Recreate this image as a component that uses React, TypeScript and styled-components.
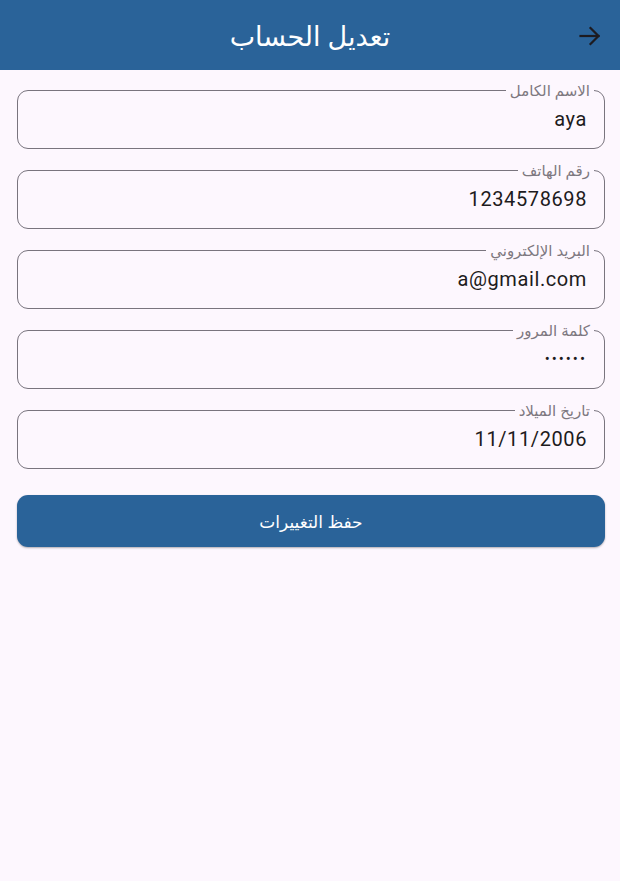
import styled, { createGlobalStyle } from "styled-components";

interface FieldData {
  label: string;
  value: string;
  secret?: boolean;
}

const fields: FieldData[] = [
  { label: "الاسم الكامل", value: "aya" },
  { label: "رقم الهاتف", value: "1234578698" },
  { label: "البريد الإلكتروني", value: "a@gmail.com" },
  { label: "كلمة المرور", value: "••••••", secret: true },
  { label: "تاريخ الميلاد", value: "11/11/2006" },
];

const GlobalStyle = createGlobalStyle`
  html, body {
    margin: 0;
    padding: 0;
    background: #fdf7fe;
    font-family: Roboto, "Noto Sans", "DejaVu Sans", sans-serif;
  }
  * {
    box-sizing: border-box;
  }
`;

const Page = styled.div`
  min-height: 881px;
  background: #fdf7fe;
`;

const Header = styled.header`
  height: 70px;
  background: #2a6399;
  display: flex;
  align-items: center;
  justify-content: center;
  position: relative;
`;

const Title = styled.h1`
  margin: 0;
  color: #ffffff;
  font-size: 27px;
  font-weight: 400;
  font-family: "Noto Sans", "DejaVu Sans", sans-serif;
`;

const BackButton = styled.button`
  position: absolute;
  right: 19px;
  top: 26px;
  width: 22px;
  height: 20px;
  padding: 0;
  border: none;
  background: transparent;
  display: flex;
  align-items: center;
  justify-content: center;
`;

const Form = styled.form`
  display: flex;
  flex-direction: column;
  gap: 13px;
  padding: 12px 15px 0 17px;
`;

const FieldBox = styled.fieldset`
  margin: 0;
  padding: 0 17px 8px 18px;
  border: 1px solid #79747e;
  border-radius: 11px;
  height: 67px;
`;

const Label = styled.legend`
  padding: 0 4px;
  margin-right: -7px;
  font-size: 15px;
  line-height: 16px;
  color: #7d7880;
  font-family: "Noto Sans", "DejaVu Sans", sans-serif;
`;

const Input = styled.input<{ $secret?: boolean }>`
  display: block;
  width: 100%;
  height: 41px;
  margin-top: 0;
  border: none;
  outline: none;
  background: transparent;
  text-align: right;
  direction: ltr;
  font-family: Roboto, sans-serif;
  font-size: ${(p) => (p.$secret ? "15px" : "20px")};
  letter-spacing: ${(p) => (p.$secret ? "2px" : "0.6px")};
  color: #1d1b20;
  padding: 0;
`;

const SaveButton = styled.button`
  margin-top: 13px;
  height: 52px;
  border: none;
  border-radius: 11px;
  background: #2a6399;
  color: #ffffff;
  font-size: 17px;
  font-family: "Noto Sans", "DejaVu Sans", sans-serif;
  box-shadow: 0 1px 2px rgba(0, 0, 0, 0.3);
`;

const ArrowIcon = () => (
  <svg
    width="22"
    height="20"
    viewBox="0 0 22 20"
    fill="none"
    stroke="#1d1b20"
    strokeWidth="2.2"
    strokeLinecap="square"
  >
    <path d="M1.5 10h18" />
    <path d="M11.5 2l8 8-8 8" />
  </svg>
);

const App = () => {
  return (
    <Page dir="rtl">
      <GlobalStyle />
      <Header>
        <Title>تعديل الحساب</Title>
        <BackButton aria-label="رجوع">
          <ArrowIcon />
        </BackButton>
      </Header>
      <Form onSubmit={(e) => e.preventDefault()}>
        {fields.map(({ label, value, secret }) => (
          <FieldBox key={label}>
            <Label>{label}</Label>
            <Input $secret={secret} defaultValue={value} readOnly />
          </FieldBox>
        ))}
        <SaveButton type="submit">حفظ التغييرات</SaveButton>
      </Form>
    </Page>
  );
};

export default App;
